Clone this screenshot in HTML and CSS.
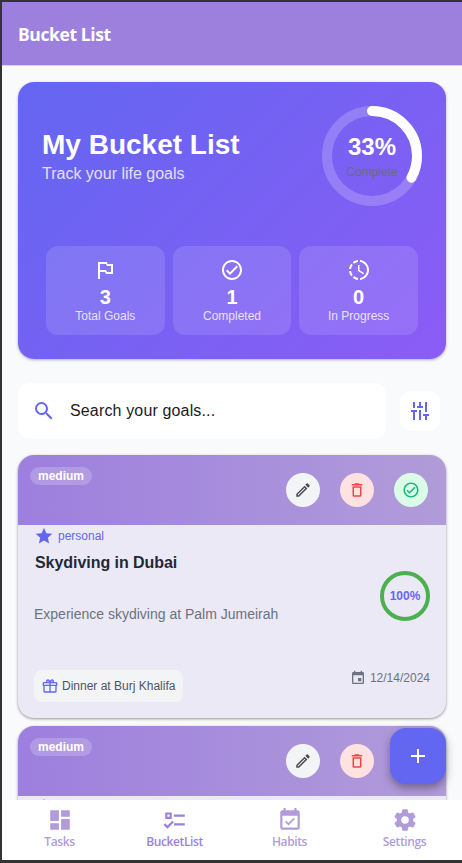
FILE: index.html
```html
<!DOCTYPE html>
<html lang="en">
<head>
<meta charset="utf-8">
<title>Bucket List</title>
<link rel="stylesheet" href="styles.css">
</head>
<body>
<svg class="defs" aria-hidden="true">
  <symbol id="flag" viewBox="0 0 24 24"><path d="M14.5,6H20V16H13L12,14H7V21H5V4H14L14.5,6M7,6V12H13L14,14H18V8H14L13,6H7Z"/></symbol>
  <symbol id="check" viewBox="0 0 24 24"><path d="M12 2C6.5 2 2 6.5 2 12S6.5 22 12 22 22 17.5 22 12 17.5 2 12 2M12 20C7.59 20 4 16.41 4 12S7.59 4 12 4 20 7.59 20 12 16.41 20 12 20M16.59 7.58L10 14.17L7.41 11.59L6 13L10 17L18 9L16.59 7.58Z"/></symbol>
  <symbol id="clock" viewBox="0 0 24 24"><path d="M13,2.03V2.05L13,4.05C17.39,4.59 20.5,8.58 19.96,12.97C19.5,16.61 16.64,19.5 13,19.93V21.93C18.5,21.38 22.5,16.5 21.95,11C21.5,6.25 17.73,2.5 13,2.03M11,2.06C9.05,2.25 7.19,3 5.67,4.26L7.1,5.74C8.22,4.84 9.57,4.26 11,4.06V2.06M4.26,5.67C3,7.19 2.25,9.04 2.05,11H4.05C4.24,9.58 4.8,8.23 5.69,7.1L4.26,5.67M2.06,13C2.26,14.96 3.03,16.81 4.27,18.33L5.69,16.9C4.81,15.77 4.24,14.42 4.06,13H2.06M7.1,18.37L5.67,19.74C7.18,21 9.04,21.79 11,22V20C9.58,19.82 8.23,19.25 7.1,18.37M12.5,7V12.25L17,14.92L16.25,16.15L11,13V7H12.5Z"/></symbol>
  <symbol id="search" viewBox="0 0 24 24"><path d="M9.5,3A6.5,6.5 0 0,1 16,9.5C16,11.11 15.41,12.59 14.44,13.73L14.71,14H15.5L20.5,19L19,20.5L14,15.5V14.71L13.73,14.44C12.59,15.41 11.11,16 9.5,16A6.5,6.5 0 0,1 3,9.5A6.5,6.5 0 0,1 9.5,3M9.5,5C7,5 5,7 5,9.5C5,12 7,14 9.5,14C12,14 14,12 14,9.5C14,7 12,5 9.5,5Z"/></symbol>
  <symbol id="tune" viewBox="0 0 24 24"><path d="M5,3H7V9H5ZM3,11H9V13H7V21H5V13H3ZM11,3H13V7H15V9H9V7H11ZM11,11H13V21H11ZM17,3H19V13H17ZM15,15H21V17H19V21H17V17H15Z"/></symbol>
  <symbol id="pencil" viewBox="0 0 24 24"><path d="M14.06,9L15,9.94L5.92,19H5V18.08L14.06,9M17.66,3C17.41,3 17.15,3.1 16.96,3.29L15.13,5.12L18.88,8.87L20.71,7.04C21.1,6.65 21.1,6 20.71,5.63L18.37,3.29C18.17,3.09 17.92,3 17.66,3M14.06,6.19L3,17.25V21H6.75L17.81,9.94L14.06,6.19Z"/></symbol>
  <symbol id="trash" viewBox="0 0 24 24"><path d="M6,19A2,2 0 0,0 8,21H16A2,2 0 0,0 18,19V7H6V19M8,9H16V19H8V9M15.5,4L14.5,3H9.5L8.5,4H5V6H19V4H15.5Z"/></symbol>
  <symbol id="star" viewBox="0 0 24 24"><path d="M12,17.27L18.18,21L16.54,13.97L22,9.24L14.81,8.62L12,2L9.19,8.62L2,9.24L7.45,13.97L5.82,21L12,17.27Z"/></symbol>
  <symbol id="gift" viewBox="0 0 24 24"><path d="M22,12V20A2,2 0 0,1 20,22H4A2,2 0 0,1 2,20V12A1,1 0 0,1 1,11V8A2,2 0 0,1 3,6H6.17C6.06,5.69 6,5.35 6,5A3,3 0 0,1 9,2C10,2 10.88,2.5 11.43,3.24V3.23L12,4L12.57,3.23V3.24C13.12,2.5 14,2 15,2A3,3 0 0,1 18,5C18,5.35 17.94,5.69 17.83,6H21A2,2 0 0,1 23,8V11A1,1 0 0,1 22,12M4,20H11V12H4V20M20,20V12H13V20H20M9,4A1,1 0 0,0 8,5A1,1 0 0,0 9,6A1,1 0 0,0 10,5A1,1 0 0,0 9,4M15,4A1,1 0 0,0 14,5A1,1 0 0,0 15,6A1,1 0 0,0 16,5A1,1 0 0,0 15,4M3,8V10H11V8H3M13,8V10H21V8H13Z"/></symbol>
  <symbol id="calendar" viewBox="0 0 24 24"><path d="M19,19H5V8H19M16,1V3H8V1H6V3H5C3.89,3 3,3.89 3,5V19A2,2 0 0,0 5,21H19A2,2 0 0,0 21,19V5C21,3.89 20.1,3 19,3H18V1M17,12H12V17H17V12Z"/></symbol>
  <symbol id="dashboard" viewBox="0 0 24 24"><path d="M13,3V9H21V3M13,21H21V11H13M3,21H11V15H3M3,13H11V3H3V13Z"/></symbol>
  <symbol id="checklist" viewBox="0 0 24 24"><path d="M3,5H9V11H3V5M5,7V9H7V7H5M11,7H21V9H11V7M11,15H21V17H11V15M5,20L1.5,16.5L2.91,15.09L5,17.17L9.59,12.59L11,14L5,20Z"/></symbol>
  <symbol id="habits" viewBox="0 0 24 24"><path d="M19,19H5V8H19M19,3H18V1H16V3H8V1H6V3H5C3.89,3 3,3.9 3,5V19A2,2 0 0,0 5,21H19A2,2 0 0,0 21,19V5C21,3.89 20.1,3 19,3M16.53,11.06L15.47,10L10.59,14.88L8.47,12.76L7.41,13.82L10.59,17L16.53,11.06Z"/></symbol>
  <symbol id="cog" viewBox="0 0 24 24"><path d="M12,15.5A3.5,3.5 0 0,1 8.5,12A3.5,3.5 0 0,1 12,8.5A3.5,3.5 0 0,1 15.5,12A3.5,3.5 0 0,1 12,15.5M19.43,12.97C19.47,12.65 19.5,12.33 19.5,12C19.5,11.67 19.47,11.34 19.43,11L21.54,9.37C21.73,9.22 21.78,8.95 21.66,8.73L19.66,5.27C19.54,5.05 19.27,4.96 19.05,5.05L16.56,6.05C16.04,5.66 15.5,5.32 14.87,5.07L14.5,2.42C14.46,2.18 14.25,2 14,2H10C9.75,2 9.54,2.18 9.5,2.42L9.13,5.07C8.5,5.32 7.96,5.66 7.44,6.05L4.95,5.05C4.73,4.96 4.46,5.05 4.34,5.27L2.34,8.73C2.21,8.95 2.27,9.22 2.46,9.37L4.57,11C4.53,11.34 4.5,11.67 4.5,12C4.5,12.33 4.53,12.65 4.57,12.97L2.46,14.63C2.27,14.78 2.21,15.05 2.34,15.27L4.34,18.73C4.46,18.95 4.73,19.03 4.95,18.95L7.44,17.94C7.96,18.34 8.5,18.68 9.13,18.93L9.5,21.58C9.54,21.82 9.75,22 10,22H14C14.25,22 14.46,21.82 14.5,21.58L14.87,18.93C15.5,18.67 16.04,18.34 16.56,17.94L19.05,18.95C19.27,19.03 19.54,18.95 19.66,18.73L21.66,15.27C21.78,15.05 21.73,14.78 21.54,14.63L19.43,12.97Z"/></symbol>
  <symbol id="plus" viewBox="0 0 24 24"><path d="M19,13H13V19H11V13H5V11H11V5H13V11H19V13Z"/></symbol>
</svg>
<div class="app">
  <header class="topbar"><h1>Bucket List</h1></header>
  <main class="content">
    <section class="hero">
      <div class="hero-top">
        <div>
          <h2>My Bucket List</h2>
          <p class="tagline">Track your life goals</p>
        </div>
        <div class="ring">
          <svg viewBox="0 0 100 100">
            <circle class="ring-track" cx="50" cy="50" r="45"/>
            <circle class="ring-value" cx="50" cy="50" r="45" pathLength="100" stroke-dasharray="33 100" transform="rotate(-90 50 50)"/>
          </svg>
          <div class="ring-label"><b>33%</b><span>Complete</span></div>
        </div>
      </div>
      <div class="stats">
        <div class="stat"><svg class="i24"><use href="#flag"/></svg><b>3</b><span>Total Goals</span></div>
        <div class="stat"><svg class="i24"><use href="#check"/></svg><b>1</b><span>Completed</span></div>
        <div class="stat"><svg class="i24"><use href="#clock"/></svg><b>0</b><span>In Progress</span></div>
      </div>
    </section>
    <div class="search-row">
      <div class="search"><svg class="i24"><use href="#search"/></svg><span>Search your goals...</span></div>
      <button class="filter"><svg class="i24"><use href="#tune"/></svg></button>
    </div>
    <article class="card">
      <div class="card-head">
        <span class="chip">medium</span>
        <div class="actions">
          <button class="act edit"><svg class="i18"><use href="#pencil"/></svg></button>
          <button class="act del"><svg class="i18"><use href="#trash"/></svg></button>
          <button class="act done"><svg class="i18"><use href="#check"/></svg></button>
        </div>
      </div>
      <div class="card-body">
        <div class="category"><svg class="i20"><use href="#star"/></svg><span>personal</span></div>
        <div class="info">
          <div>
            <h3>Skydiving in Dubai</h3>
            <p>Experience skydiving at Palm Jumeirah</p>
          </div>
          <div class="percent">100%</div>
        </div>
        <div class="card-foot">
          <div class="reward"><svg class="i16"><use href="#gift"/></svg><span>Dinner at Burj Khalifa</span></div>
          <div class="date"><svg class="i16"><use href="#calendar"/></svg><span>12/14/2024</span></div>
        </div>
      </div>
    </article>
    <article class="card">
      <div class="card-head">
        <span class="chip">medium</span>
        <div class="actions">
          <button class="act edit"><svg class="i18"><use href="#pencil"/></svg></button>
          <button class="act del"><svg class="i18"><use href="#trash"/></svg></button>
          <button class="act done"><svg class="i18"><use href="#check"/></svg></button>
        </div>
      </div>
      <div class="card-body">
        <div class="category"><svg class="i20"><use href="#star"/></svg></div>
      </div>
    </article>
  </main>
  <button class="fab"><svg class="i24"><use href="#plus"/></svg></button>
  <nav class="tabs">
    <a class="tab"><svg class="i26"><use href="#dashboard"/></svg><span>Tasks</span></a>
    <a class="tab active"><svg class="i26"><use href="#checklist"/></svg><span>BucketList</span></a>
    <a class="tab"><svg class="i26"><use href="#habits"/></svg><span>Habits</span></a>
    <a class="tab"><svg class="i26"><use href="#cog"/></svg><span>Settings</span></a>
  </nav>
</div>
</body>
</html>
```
FILE: styles.css
```css
* { box-sizing: border-box; margin: 0; padding: 0; }
html, body { height: 100%; overflow: hidden; }
body {
  background: #333335;
  padding: 2px 0 3px 2px;
  font-family: "Liberation Sans", Arial, sans-serif;
}
.defs { display: none; }
svg { display: block; fill: currentColor; flex: none; }
button { border: 0; display: flex; align-items: center; justify-content: center; flex: none; }
.i16 { width: 16px; height: 16px; }
.i18 { width: 18px; height: 18px; }
.i20 { width: 20px; height: 20px; }
.i24 { width: 24px; height: 24px; }
.i26 { width: 26px; height: 26px; }

.app { position: relative; height: 858px; display: flex; flex-direction: column; background: #f9fafc; }
.topbar {
  height: 64px; flex: none; display: flex; align-items: center; padding: 0 16px;
  background: #9d7fde; border-bottom: 1px solid #d8d8d8; color: #fff;
}
.topbar h1 { font: 700 17.5px/24px "Open Sans", "Noto Sans", sans-serif; letter-spacing: -.4px; padding-top: 1px; }

.content { flex: 1; min-height: 0; overflow: hidden; padding: 16px 16px 0; }

.hero {
  height: 277px; padding: 24px; border-radius: 16px; color: #fff;
  background: linear-gradient(135deg, #6366f1, #8b5cf6);
  box-shadow: 0 1px 3px rgba(0, 0, 0, .3);
}
.hero-top { height: 100px; display: flex; justify-content: space-between; align-items: center; }
.hero h2 { font-size: 28px; line-height: 34px; }
.tagline { font-size: 16px; line-height: 22px; padding-top: 1px; margin-bottom: -1px; opacity: .8; }
.ring { width: 100px; height: 100px; display: grid; }
.ring > * { grid-area: 1 / 1; }
.ring circle { fill: none; stroke-width: 10; }
.ring-track { stroke: rgba(255, 255, 255, .2); }
.ring-value { stroke: #fff; stroke-linecap: round; }
.ring-label { display: flex; flex-direction: column; align-items: center; padding-top: 27px; }
.ring-label b { font-size: 24px; line-height: 28px; }
.ring-label span { font-size: 12px; line-height: 20px; padding-top: 1px; color: #6b6b80; }
.stats { display: grid; grid-template-columns: repeat(3, 1fr); gap: 8px; margin: 40px 4px 0; }
.stat {
  height: 89px; padding-top: 12px; border-radius: 12px; background: rgba(255, 255, 255, .12);
  display: flex; flex-direction: column; align-items: center;
}
.stat b { font-size: 20px; line-height: 24px; margin-top: 3px; }
.stat span { font-size: 12px; line-height: 14px; opacity: .8; }

.search-row { display: flex; align-items: center; gap: 14px; margin: 24px 0 16px; }
.search {
  width: 368px; height: 56px; border-radius: 12px; background: #fff; padding: 0 14px;
  display: flex; align-items: center; gap: 14px; font-size: 16px; letter-spacing: .15px; color: #1d1b20;
}
.search svg, .filter svg { color: #6366f1; }
.filter { width: 40px; height: 40px; border-radius: 12px; background: #fff; }

.card {
  height: 263px; margin-bottom: 8px; border-radius: 16px; overflow: hidden;
  background: #ece9f6; box-shadow: 0 1px 3px rgba(0, 0, 0, .4);
}
.card-head {
  height: 70px; padding: 12px 18px 0 12px; display: flex; justify-content: space-between; align-items: flex-start;
  background: linear-gradient(90deg, #9d7fde, #b19cd9);
}
.chip {
  height: 18px; padding: 0 8px; border-radius: 9px; background: rgba(255, 255, 255, .2);
  color: #fff; font-size: 12px; font-weight: bold; line-height: 18px;
}
.actions { display: flex; gap: 20px; padding-top: 6px; }
.act { width: 34px; height: 34px; border-radius: 50%; }
.edit { background: #f3f4f6; color: #4b4b55; }
.del { background: #fee2e2; color: #ef4444; }
.done { background: #dcfce7; color: #10b981; }

.card-body { padding: 0 16px; }
.category { display: flex; align-items: center; gap: 4px; height: 22px; font-size: 12px; color: #6366f1; }
.info { display: flex; justify-content: space-between; height: 98px; }
.info h3 { font-size: 16px; line-height: 20px; padding: 6px 0 0 1px; letter-spacing: -.05px; color: #1f2937; }
.info p { font-size: 14px; line-height: 20px; margin-top: 31px; color: #6b7280; }
.percent {
  width: 50px; height: 50px; margin-top: 24px; border: 4px solid #4caf50; border-radius: 50%;
  font-size: 12px; font-weight: bold; line-height: 42px; text-align: center; color: #6366f1;
}
.card-foot { display: flex; justify-content: space-between; align-items: flex-start; margin-top: 25px; font-size: 12px; }
.reward {
  height: 32px; padding: 0 8px; border-radius: 8px; background: #f3f4f6; color: #4b5563;
  display: flex; align-items: center; gap: 4px;
}
.reward svg { color: #6366f1; }
.date { display: flex; align-items: center; gap: 4px; height: 16px; color: #6b7280; }

.fab {
  position: absolute; right: 16px; bottom: 76px; width: 56px; height: 56px; border-radius: 16px;
  background: #6366f1; color: #fff; box-shadow: 0 4px 8px rgba(0, 0, 0, .35);
}

.tabs { height: 60px; flex: none; display: grid; grid-template-columns: repeat(4, 1fr); background: #fff; }
.tab {
  display: flex; flex-direction: column; align-items: center; padding-top: 6.5px; color: #b19cd9;
  font: 600 12px/16px "Open Sans", "Noto Sans", sans-serif; letter-spacing: -.4px;
}
.tab span { margin-top: 1.5px; }
.active { color: #9d7fde; }
```
